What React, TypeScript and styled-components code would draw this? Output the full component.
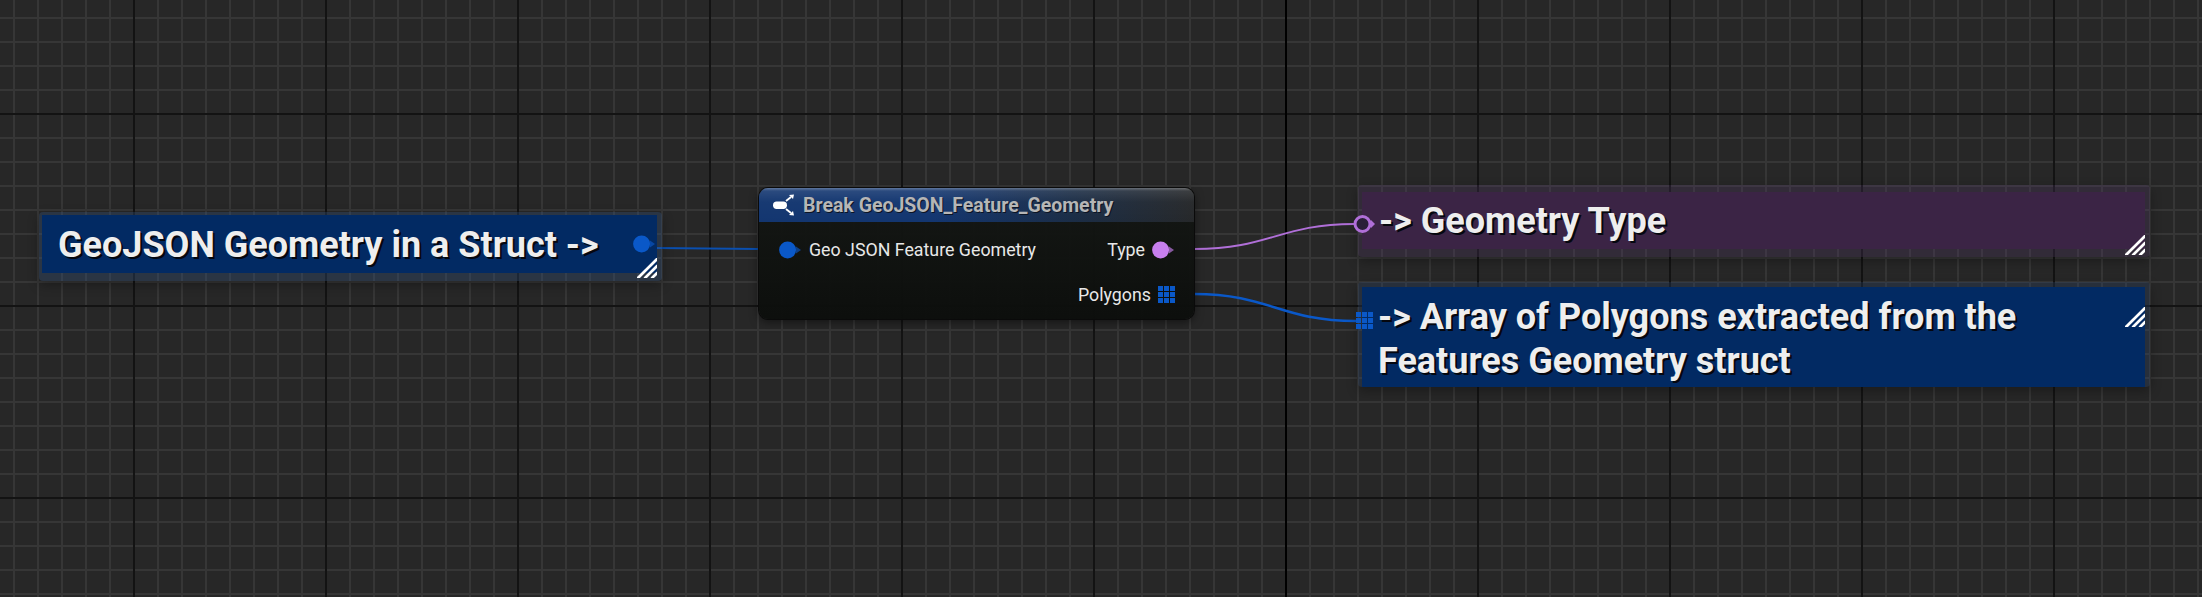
import React from "react";
import styled, { createGlobalStyle } from "styled-components";

const Global = createGlobalStyle`
  html, body { margin: 0; padding: 0; background: #272727; }
  body { font-family: Roboto, "Liberation Sans", sans-serif; overflow: hidden; }
`;

const Canvas = styled.div`
  position: relative;
  width: 2202px;
  height: 597px;
  overflow: hidden;
  background-color: #272727;
  background-image:
    linear-gradient(90deg, transparent 1285px, #000 1285px, #000 1287px, transparent 1287px),
    repeating-linear-gradient(90deg, transparent 0 133px, #131313 133px 135px, transparent 135px 192px),
    repeating-linear-gradient(180deg, transparent 0 113px, #131313 113px 115px, transparent 115px 192px),
    repeating-linear-gradient(90deg, transparent 0 13px, #363636 13px 15px, transparent 15px 24px),
    repeating-linear-gradient(180deg, transparent 0 17px, #363636 17px 19px, transparent 19px 24px);
`;

const Wires = styled.svg`
  position: absolute;
  left: 0;
  top: 0;
  width: 2202px;
  height: 597px;
  pointer-events: none;
`;

const Comment = styled.div<{ $x: number; $y: number; $w: number; $h: number; $tint: string; $pad: string }>`
  position: absolute;
  left: ${(p) => p.$x}px;
  top: ${(p) => p.$y}px;
  width: ${(p) => p.$w}px;
  height: ${(p) => p.$h}px;
  box-sizing: border-box;
  padding: ${(p) => p.$pad};
  display: flex;
  background: ${(p) => p.$tint};
  border-radius: 4px;
  box-shadow: 0 4px 12px rgba(0, 0, 0, 0.3);
`;

const CommentBody = styled.div<{ $color: string; $align: string; $lh: number }>`
  flex: 1;
  align-self: flex-start;
  display: flex;
  align-items: ${(p) => p.$align};
  justify-content: space-between;
  background: ${(p) => p.$color};
  color: #eeeeee;
  font-weight: 700;
  font-size: 36px;
  line-height: ${(p) => p.$lh}px;
  text-shadow: 2px 2px 0 #05070f;
  white-space: pre-line;
`;

const CommentText = styled.div<{ $pad: string }>`
  flex: 1;
  padding: ${(p) => p.$pad};
`;

const EdgePin = styled.svg<{ $gap: string }>`
  flex: none;
  margin: ${(p) => p.$gap};
`;

const CommentPin = styled.div`
  flex: none;
  display: flex;
  margin-right: 1px;
`;

const Handle = styled.svg`
  position: absolute;
  right: 5px;
  width: 20px;
  height: 20px;
`;

const Node = styled.div`
  position: absolute;
  left: 759px;
  top: 188px;
  width: 435px;
  height: 131px;
  border-radius: 9px;
  background: linear-gradient(180deg, rgba(20, 23, 20, 0.96), rgba(12, 14, 12, 0.97));
  box-shadow: 0 0 0 1px #0a0a0a, 0 3px 10px rgba(0, 0, 0, 0.5);
  display: flex;
  flex-direction: column;
  overflow: hidden;
`;

const NodeTitle = styled.div`
  height: 34px;
  flex: none;
  display: flex;
  align-items: center;
  gap: 8px;
  padding-left: 14px;
  background:
    linear-gradient(180deg, rgba(255, 255, 255, 0.32) 0, rgba(255, 255, 255, 0.1) 3px, rgba(255, 255, 255, 0.02) 14px, rgba(0, 0, 0, 0) 34px),
    linear-gradient(90deg, #133670 0, #133670 40%, #1b2d46 72%, #26282a 100%);
  color: #b6b6b6;
  font-size: 19.5px;
  font-weight: 700;
  text-shadow: 1px 1px 0 #0c1424;
`;

const NodeRows = styled.div`
  flex: 1;
  display: grid;
  grid-template-columns: auto 1fr;
  grid-template-rows: 45px 45px;
  padding: 5px 19px 0 20px;
`;

const Row = styled.div<{ $right?: boolean }>`
  display: flex;
  align-items: center;
  gap: 7px;
  color: #e8e8e8;
  font-size: 17.8px;
  font-weight: 400;
  justify-content: ${(p) => (p.$right ? "flex-end" : "flex-start")};
  grid-column: ${(p) => (p.$right ? "2" : "1")};
`;

const HandleIcon = ({ top }: { top: number }) => (
  <Handle viewBox="0 0 20 20" style={{ top }}>
    <g stroke="#fff" strokeWidth="2.7" fill="none">
      <path d="M0.5 20.5 L20.5 0.5" />
      <path d="M7.5 20.5 L20.5 7.5" />
      <path d="M14.5 20.5 L20.5 14.5" />
    </g>
  </Handle>
);

const RoundPin = ({ color }: { color: string }) => (
  <svg width="23" height="18" viewBox="0 0 23 18">
    <path d="M17 5.5 L22 9 L17 12.5 Z" fill={color} opacity="0.65" />
    <circle cx="8.6" cy="9" r="8.5" fill={color} />
  </svg>
);

const GridCells = ({ color }: { color: string }) => (
  <>
    {[0, 6, 12].map((y) =>
      [0, 6, 12].map((x) => <rect key={`${x}-${y}`} x={x} y={y} width="5" height="5" fill={color} />),
    )}
  </>
);

const BreakIcon = () => (
  <svg width="22" height="22" viewBox="0 0 22 22">
    <rect x="0" y="7.5" width="14" height="7.5" rx="3.7" fill="#fff" />
    <path d="M13 7 L18 3" stroke="#fff" strokeWidth="1.8" />
    <path d="M16 1 L21 0.5 L20 5 Z" fill="#fff" />
    <path d="M13 15 L18 19" stroke="#fff" strokeWidth="1.8" />
    <path d="M16 21 L21 21.5 L20 17 Z" fill="#fff" />
  </svg>
);

export default function App() {
  return (
    <>
      <Global />
      <Canvas>
        <Wires viewBox="0 0 2202 597">
          <path d="M655 248 L759 249" stroke="#0a4fb0" strokeWidth="2" fill="none" />
          <path d="M1194 249 C1270 249 1280 224 1354 224" stroke="#b06fd8" strokeWidth="2" fill="none" />
          <path d="M1194 294 C1270 294 1280 321 1356 321" stroke="#0a58c8" strokeWidth="2.4" fill="none" />
        </Wires>

        <Comment $x={39} $y={212} $w={623} $h={69} $tint="rgba(50,85,135,0.3)" $pad="3px 5px 0 3px">
          <CommentBody $color="#022a63" $align="center" $lh={55}>
            <CommentText $pad="3px 0 0 16px">GeoJSON Geometry in a Struct -&gt;</CommentText>
            <CommentPin>
              <RoundPin color="#0a58c8" />
            </CommentPin>
          </CommentBody>
          <HandleIcon top={46} />
        </Comment>

        <Node>
          <NodeTitle>
            <BreakIcon />
            Break GeoJSON_Feature_Geometry
          </NodeTitle>
          <NodeRows>
            <Row>
              <RoundPin color="#0a58c8" />
              Geo JSON Feature Geometry
            </Row>
            <Row $right>
              Type
              <RoundPin color="#c77fee" />
            </Row>
            <Row $right>
              Polygons
              <svg width="17" height="17" viewBox="0 0 17 17">
                <GridCells color="#0a58c8" />
              </svg>
            </Row>
          </NodeRows>
        </Node>

        <Comment $x={1358} $y={185} $w={792} $h={72} $tint="rgba(80,55,100,0.28)" $pad="7px 5px 0 4px">
          <CommentBody $color="#3b2445" $align="flex-start" $lh={55}>
            <EdgePin $gap="22px 0 0 -10px" width="23" height="20" viewBox="0 0 23 20">
              <circle cx="10.5" cy="10" r="7.5" fill="#2a1f38" stroke="#b06fd8" strokeWidth="3" />
              <path d="M19 6 L23 10 L19 14 Z" fill="#b06fd8" />
            </EdgePin>
            <CommentText $pad="2px 0 0 4px">-&gt; Geometry Type</CommentText>
          </CommentBody>
          <HandleIcon top={50} />
        </Comment>

        <Comment $x={1358} $y={282} $w={792} $h={105} $tint="rgba(40,70,120,0.25)" $pad="5px 5px 0 4px">
          <CommentBody $color="#022a63" $align="flex-start" $lh={44}>
            <EdgePin $gap="25px 0 0 -6px" width="17" height="17" viewBox="0 0 17 17">
              <GridCells color="#0a58c8" />
            </EdgePin>
            <CommentText $pad="8px 0 4px 5px">{"-> Array of Polygons extracted from the\nFeatures Geometry struct"}</CommentText>
          </CommentBody>
          <HandleIcon top={25} />
        </Comment>
      </Canvas>
    </>
  );
}
